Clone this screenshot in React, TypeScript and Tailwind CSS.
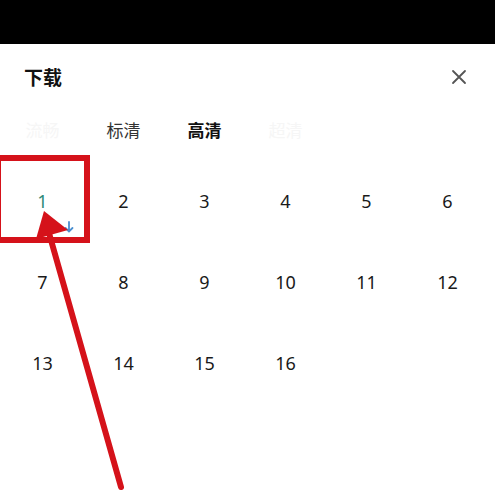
import React from "react";

const font = { fontFamily: '"Noto Sans", "Noto Sans CJK SC", sans-serif' };

export default function App() {
  const nums = Array.from({ length: 16 }, (_, i) => i + 1);
  return (
    <div className="relative w-[495px] h-[504px] bg-white overflow-hidden" style={font}>
      <div className="h-[44px] bg-black" />
      <div className="flex items-center justify-between pl-[24px] pr-[28px] h-[68px]">
        <span className="text-[19px] font-bold text-[#111] leading-none">下载</span>
        <svg width="16" height="16" viewBox="0 0 16 16" className="mt-[-2px]">
          <path d="M2 2 L14 14 M14 2 L2 14" stroke="#555" strokeWidth="1.8" strokeLinecap="round" />
        </svg>
      </div>
      <div className="grid grid-cols-6 w-[486px] ml-[2px] h-[36px] items-center text-[17px] leading-none">
        <span className="text-center text-[#f6f6f6]">流畅</span>
        <span className="text-center text-[#333]">标清</span>
        <span className="text-center font-bold text-[#111]">高清</span>
        <span className="text-center text-[#f6f6f6]">超清</span>
      </div>
      <div className="grid grid-cols-6 w-[486px] ml-[2px] mt-[12px] auto-rows-[81px] text-[18px] leading-none">
        {nums.map((n) => (
          <div key={n} className="relative flex items-center justify-center">
            <span className={n === 1 ? "text-[#2f8a78]" : "text-[#1a1a1a]"}>{n}</span>
            {n === 1 && (
              <svg width="10" height="12" viewBox="0 0 10 12" className="absolute left-[62px] top-[61px]">
                <path d="M5 1 V10 M1.5 7 L5 10.5 L8.5 7" stroke="#4a8fd0" strokeWidth="1.8" fill="none" strokeLinecap="round" />
              </svg>
            )}
          </div>
        ))}
      </div>
      <svg className="absolute left-0 top-0 pointer-events-none" width="495" height="504" viewBox="0 0 495 504">
        <rect x="-2" y="158" width="89" height="82" fill="none" stroke="#d5121a" strokeWidth="6" />
        <line x1="121" y1="487" x2="47" y2="226" stroke="#d5121a" strokeWidth="6" strokeLinecap="round" />
        <polygon points="44,211 36,239 68,230" fill="#d5121a" />
      </svg>
    </div>
  );
}
